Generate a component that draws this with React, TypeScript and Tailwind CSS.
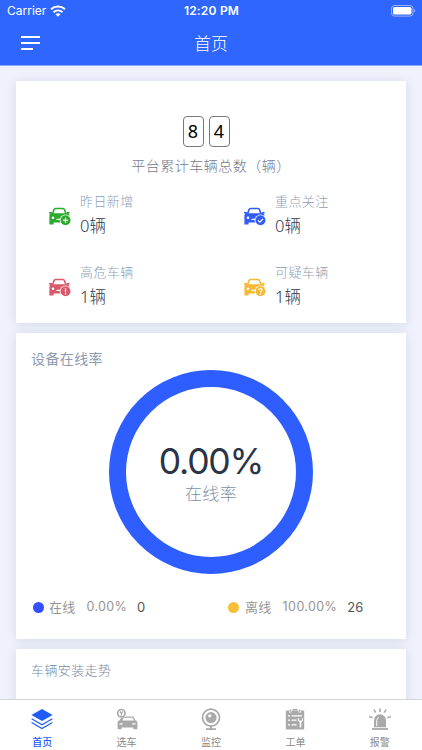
import { ReactNode } from "react";

interface StatProps {
  label: string;
  value: string;
  color: string;
  badge: ReactNode;
}

interface TabProps {
  label: string;
  active?: boolean;
  children: ReactNode;
}

function WifiIcon() {
  return (
    <svg width="16" height="12" viewBox="0 0 16 12" fill="none" stroke="#fff" strokeWidth="2.1">
      <path d="M1 4.3C5 .6 11 .6 15 4.3" />
      <path d="M3.5 7.2c2.6-2.3 6.4-2.3 9 0" />
      <path d="M5.5 9.2c1.4-1.2 3.6-1.2 5 0L8 11.7z" fill="#fff" stroke="none" />
    </svg>
  );
}

function BatteryIcon() {
  return (
    <svg width="25" height="12" viewBox="0 0 25 12">
      <rect x="0.5" y="0.5" width="21.5" height="10.6" rx="3" fill="none" stroke="#fff" strokeOpacity="0.5" />
      <rect x="2" y="2" width="18.5" height="7.6" rx="1.6" fill="#fff" />
      <path d="M23.2 4v3.6c1.5-.6 1.5-3 0-3.6z" fill="#fff" fillOpacity="0.5" />
    </svg>
  );
}

function CarIcon({ color, badge }: { color: string; badge: ReactNode }) {
  return (
    <svg width="23" height="19" viewBox="0 0 23 19" className={color}>
      <path
        d="M4.6 7 5.9 2.8C6.2 1.9 6.8 1.5 7.7 1.5h7.1c.9 0 1.5.4 1.8 1.3L17.9 7"
        fill="none"
        stroke="currentColor"
        strokeWidth="1.6"
      />
      <path
        fill="currentColor"
        d="M1 5h2.6l.6 1.3h14.2L19 5h2.6v1.5h-1.4c.9.7 1.2 1.5 1.2 2.5v8.6h-4.2v-2H5.6v2H1.4V9c0-1 .3-1.8 1.1-2.5H1z"
      />
      <circle cx="5" cy="10.8" r="1.3" fill="#fff" />
      <path d="M9 12.4h3" stroke="#fff" strokeWidth="1.4" strokeLinecap="round" />
      <circle cx="17.5" cy="13.3" r="5.8" fill="#fff" />
      <circle cx="17.5" cy="13.3" r="5" fill="currentColor" />
      <g fill="none" stroke="#fff" strokeWidth="1.2">
        {badge}
      </g>
    </svg>
  );
}

function Stat({ label, value, color, badge }: StatProps) {
  return (
    <div className="flex h-[71px] w-[195px] items-start">
      <div className="mt-[16px] mr-[9px]">
        <CarIcon color={color} badge={badge} />
      </div>
      <div className="flex flex-col">
        <p className="text-[13px] leading-5 font-light tracking-[0.4px] text-[#8f9eb5]">{label}</p>
        <p className="mt-[3px] font-['Noto_Sans','Noto_Sans_CJK_SC',sans-serif] text-[16.5px] leading-6 font-light text-[#2f394b]">
          {value}
        </p>
      </div>
    </div>
  );
}

function Tab({ label, active, children }: TabProps) {
  return (
    <div
      className={`flex flex-1 flex-col items-center pt-[7px] ${
        active ? "font-medium text-[#1f5dfa]" : "text-[#8a8a8a]"
      }`}
    >
      <svg width="24" height="24" viewBox="0 0 24 24">
        {children}
      </svg>
      <p className="mt-[3px] text-[10px] leading-4">{label}</p>
    </div>
  );
}

export default function App() {
  return (
    <div className="flex h-[750px] w-[422px] flex-col overflow-hidden bg-[#eff2fc] font-[Inter,'Noto_Sans_CJK_SC',sans-serif]">
      <header className="h-[66px] shrink-0 border-b border-[#88a8ff] bg-[#2e66ff] text-white">
        <div className="grid h-[22px] grid-cols-3 items-center pr-[6px] pl-[7px]">
          <div className="flex items-center gap-[4px] text-[12px] leading-4">
            <span>Carrier</span>
            <WifiIcon />
          </div>
          <span className="text-center text-[12px] leading-4 font-semibold tracking-[0.2px]">12:20 PM</span>
          <div className="flex justify-end">
            <BatteryIcon />
          </div>
        </div>
        <div className="grid h-[42px] grid-cols-3 items-center px-[21px]">
          <div className="flex flex-col gap-1">
            <span className="h-[2px] w-[19px] bg-white" />
            <span className="h-[2px] w-[19px] bg-white" />
            <span className="h-[2px] w-[12px] bg-white" />
          </div>
          <h1 className="mt-[2px] text-center text-[17px] leading-6 font-light">首页</h1>
        </div>
      </header>

      <main className="flex min-h-0 flex-1 flex-col gap-[10px] overflow-hidden px-[16px] pt-[15px]">
        <section className="h-[242px] shrink-0 bg-white pt-[35px] shadow-[0_1px_10px_rgba(60,70,110,0.14)]">
          <div className="flex justify-center gap-[5px] pr-[10px] font-['Noto_Sans',sans-serif] text-[18px] text-black">
            <span className="flex h-[31px] w-[21px] items-center justify-center rounded-[4px] border border-[#777780]">8</span>
            <span className="flex h-[31px] w-[21px] items-center justify-center rounded-[4px] border border-[#777780]">4</span>
          </div>
          <p className="mt-[8px] text-center text-[14px] leading-[22px] font-light tracking-[0.5px] text-[#737a8a]">
            平台累计车辆总数（辆）
          </p>
          <div className="mt-[14px] flex w-[430px] flex-wrap pl-[32px]">
            <Stat label="昨日新增" value="0辆" color="text-[#2dab2d]" badge={<path d="M17.5 10.7v5.2M14.9 13.3h5.2" />} />
            <Stat label="重点关注" value="0辆" color="text-[#315cf5]" badge={<path d="m15.1 13.3 1.8 1.8 3.1-3.3" />} />
            <Stat label="高危车辆" value="1辆" color="text-[#d9596a]" badge={<path d="M17.5 10.2v4M17.5 15.1v1.3" />} />
            <Stat
              label="可疑车辆"
              value="1辆"
              color="text-[#f4b935]"
              badge={<path d="M15.9 12.1c0-2 3.2-2 3.2-.1 0 1.2-1.6 1.2-1.6 2.6M17.5 15.3v1.2" />}
            />
          </div>
        </section>

        <section className="flex h-[306px] shrink-0 flex-col bg-white pt-[15px] shadow-[0_1px_10px_rgba(60,70,110,0.14)]">
          <h2 className="pl-[15px] text-[14px] leading-[22px] tracking-[0.4px] text-[#8c9bb1]">设备在线率</h2>
          <div className="flex h-[204px] w-[204px] flex-col items-center self-center rounded-full border-[17px] border-[#2e5eff] pt-[56px]">
            <p className="text-[35.5px] leading-[38px] tracking-[-1.2px] whitespace-nowrap text-[#2a3447]">0.00%</p>
            <p className="mt-[1px] text-[17px] leading-6 font-light tracking-[0.4px] text-[#8391a8]">在线率</p>
          </div>
          <div className="mt-[22px] flex pl-[17px] text-[12.5px] leading-[22px] text-[#959595]">
            <div className="flex w-[195px] items-center">
              <span className="mr-[5px] h-[11px] w-[11px] rounded-full bg-[#334fff]" />
              <span className="mr-[11px] text-[13px] tracking-[0.3px]">在线</span>
              <span className="mr-[10px] tracking-[0.3px]">0.00%</span>
              <span className="text-[13px] text-[#555]">0</span>
            </div>
            <div className="flex items-center">
              <span className="mr-[6px] h-[11px] w-[11px] rounded-full bg-[#f6bf38]" />
              <span className="mr-[11px] text-[13px] tracking-[0.3px]">离线</span>
              <span className="mr-[10px] tracking-[0.4px]">100.00%</span>
              <span className="text-[13px] text-[#555]">26</span>
            </div>
          </div>
        </section>

        <section className="h-[200px] shrink-0 bg-white pt-[10px] shadow-[0_1px_10px_rgba(60,70,110,0.14)]">
          <h2 className="pl-[15px] text-[13px] leading-[22px] font-light tracking-[0.4px] text-[#7b8ca4]">车辆安装走势</h2>
        </section>
      </main>

      <nav className="flex h-[51px] shrink-0 border-t border-[#d4d4d8] bg-white">
        <Tab label="首页" active>
          <path d="M12 2 22.6 8 12 14 1.4 8z" fill="currentColor" />
          <path d="m1.6 11.8 10.4 6 10.4-6M1.6 15.6l10.4 6 10.4-6" fill="none" stroke="currentColor" strokeWidth="1.2" />
        </Tab>
        <Tab label="选车">
          <path d="M7 9.4h11.4l2.2 4.2c1.2.3 1.8 1 1.8 2v6.6h-4v-1.8H6.6v1.8h-4v-6.6c0-1 .6-1.7 1.8-2z" fill="#a9a9a9" />
          <path d="M8.8 10.8h8.8l1.4 2.8H7.4z" fill="#fff" />
          <path d="M4.5 16.8h3.2M17.3 16.8h3.2" stroke="#fff" strokeWidth="1.2" />
          <circle cx="6.4" cy="6.2" r="4.8" fill="#fff" />
          <circle cx="6.4" cy="6.2" r="3.7" fill="none" stroke="#a9a9a9" strokeWidth="1.7" />
          <path d="m5 4.5 1.4 1.8 1.4-1.8M6.4 6v2.8" fill="none" stroke="#a9a9a9" strokeWidth="1.3" />
        </Tab>
        <Tab label="监控">
          <circle cx="12" cy="10.6" r="8.5" fill="none" stroke="#a9a9a9" strokeWidth="1.7" />
          <circle cx="12" cy="10.6" r="5.6" fill="#a9a9a9" />
          <circle cx="10.8" cy="8.8" r="1.6" fill="#fff" />
          <path d="M12 19v3M7 22.2h10" stroke="#a9a9a9" strokeWidth="1.8" />
        </Tab>
        <Tab label="工单">
          <rect x="2.8" y="3.6" width="18.4" height="18.8" rx="1" fill="#a9a9a9" />
          <path d="M7.2 2v3.4M16.8 2v3.4" stroke="#fff" strokeWidth="2.4" />
          <path d="M7.2 2.6v2.2M16.8 2.6v2.2M9.5 2.6h5" stroke="#a9a9a9" strokeWidth="1.4" />
          <path d="M5 8.8h2M8.6 8.8H19M5 13.2h2M8.6 13.2h5M5 17.8h2M8.6 17.8h5" stroke="#fff" strokeWidth="1.3" />
          <path d="M14.9 11.2v2.6l1.8 1.4v5.2h1.6v-5.2l1.8-1.4v-2.6h-1.2v2.4h-2.8v-2.4z" fill="#fff" />
        </Tab>
        <Tab label="报警">
          <path d="M6 20.2v-7a6 6 0 0 1 12 0v7z" fill="#a9a9a9" />
          <path d="M4 22h16" stroke="#a9a9a9" strokeWidth="1.8" />
          <path d="M8.7 19v-5.4c0-1.4.8-2.6 2.1-3.1" fill="none" stroke="#fff" strokeWidth="1" />
          <path
            d="M12 1.4v3.6M5.9 2.6l1.8 3M18.1 2.6l-1.8 3M1.3 9.5l3.2 1.2M22.7 9.5l-3.2 1.2"
            stroke="#a9a9a9"
            strokeWidth="1.6"
          />
        </Tab>
      </nav>
    </div>
  );
}
